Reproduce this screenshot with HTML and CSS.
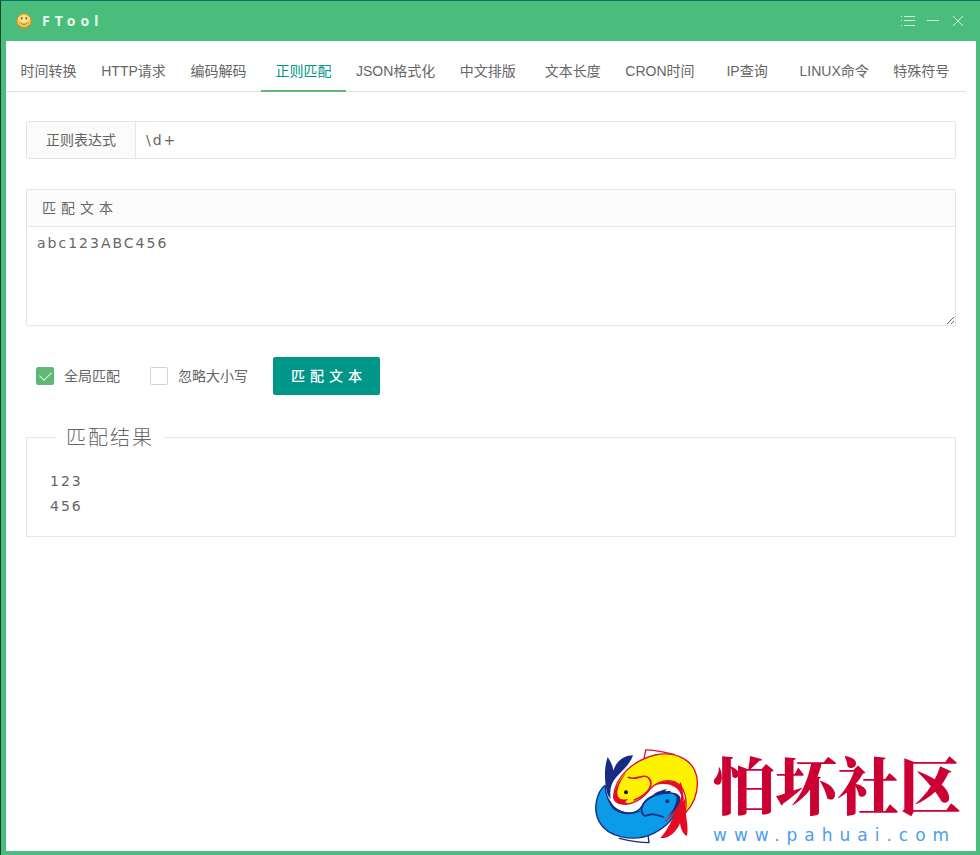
FILE: index.html
```html
<!DOCTYPE html>
<html lang="zh-CN">
<head>
<meta charset="utf-8">
<meta name="viewport" content="width=device-width, initial-scale=1">
<title>FTool</title>
<link rel="stylesheet" href="styles.css">
</head>
<body>
<div class="window">
  <header class="titlebar">
    <svg class="app-icon" viewBox="0 0 16 16" aria-hidden="true">
      <defs>
        <radialGradient id="face" cx="50%" cy="38%" r="60%">
          <stop offset="0" stop-color="#fff0a4"/>
          <stop offset="0.65" stop-color="#f3d467"/>
          <stop offset="1" stop-color="#dfa02e"/>
        </radialGradient>
      </defs>
      <circle cx="8" cy="8" r="7.3" fill="url(#face)" stroke="#c98a2a"/>
      <ellipse cx="5.8" cy="5.4" rx="0.8" ry="1.3" fill="#80601a"/>
      <ellipse cx="10.2" cy="5.4" rx="0.8" ry="1.3" fill="#80601a"/>
      <path d="M3.8 9.4Q8 13.6 12.2 9.4" fill="none" stroke="#a87c22" stroke-linecap="round"/>
    </svg>
    <h1 class="app-name">FTool</h1>
    <div class="window-actions">
      <button type="button" class="icon-button" aria-label="菜单">
        <svg viewBox="0 0 14 12"><path d="M0 1.5h1M0 5.5h1M0 10.5h1M3 1.5h11M3 5.5h11M3 10.5h11"/></svg>
      </button>
      <button type="button" class="icon-button" aria-label="最小化">
        <svg viewBox="0 0 14 12"><path d="M1 5.5h12"/></svg>
      </button>
      <button type="button" class="icon-button" aria-label="关闭">
        <svg viewBox="0 0 14 12"><path d="M2 1l10 10M12 1L2 11"/></svg>
      </button>
    </div>
  </header>

  <main class="content">
    <nav class="tabs">
      <a class="tab" href="#time">时间转换</a>
      <a class="tab" href="#http">HTTP请求</a>
      <a class="tab" href="#code">编码解码</a>
      <a class="tab tab-active" href="#regex" aria-current="page">正则匹配</a>
      <a class="tab" href="#json">JSON格式化</a>
      <a class="tab" href="#format">中文排版</a>
      <a class="tab" href="#length">文本长度</a>
      <a class="tab" href="#cron">CRON时间</a>
      <a class="tab" href="#ip">IP查询</a>
      <a class="tab" href="#linux">LINUX命令</a>
      <a class="tab" href="#symbols">特殊符号</a>
    </nav>

    <form class="regex-form">
      <div class="pattern">
        <label class="pattern-label" for="pattern">正则表达式</label>
        <input class="pattern-input" id="pattern" type="text" value="\d+">
      </div>

      <div class="source">
        <label class="source-label" for="source">匹配文本</label>
        <textarea class="source-input" id="source">abc123ABC456</textarea>
      </div>

      <div class="options">
        <label class="option"><input class="check" type="checkbox" checked>全局匹配</label>
        <label class="option"><input class="check" type="checkbox">忽略大小写</label>
        <button type="button" class="submit">匹配文本</button>
      </div>

      <fieldset class="result">
        <legend class="result-title">匹配结果</legend>
        <div>123</div>
        <div>456</div>
      </fieldset>
    </form>

    <footer class="brand">
      <svg class="brand-logo" viewBox="32 38 312 288" aria-hidden="true">
        <g stroke-linejoin="round" stroke-linecap="round">
          <path d="M178 76L184 44C210 42 240 52 270 57" fill="none" stroke="#d71532" stroke-width="4"/>
          <path d="M190 292L194 322C165 322 130 315 105 309" fill="none" stroke="#182b82" stroke-width="4"/>
          <path d="M62 150C36 172 25 222 44 258C68 304 146 324 208 294C248 274 276 242 286 202C287 182 270 172 250 172C215 172 184 188 172 214C160 232 142 236 120 232C82 225 66 195 62 150Z" fill="#0a9ce8" stroke="#182b82" stroke-width="4"/>
          <path d="M88 182C92 124 146 76 212 59C272 47 335 72 339 138C341 178 325 210 302 235C311 194 302 152 270 139C238 128 206 148 190 170C170 195 130 215 106 203C92 198 87 192 88 182Z" fill="#fff200" stroke="#d71532" stroke-width="4"/>
          <path d="M88 182C92 156 106 130 126 112C108 136 96 160 100 180C103 194 118 193 132 192C122 198 120 202 132 205C108 212 86 204 88 182Z" fill="#e50b24"/>
          <path d="M132 126C154 138 180 112 192 127C210 145 196 174 150 194" fill="none" stroke="#d71532" stroke-width="5"/>
          <path d="M66 162C60 130 60 94 70 65C79 79 86 92 87 106C96 76 120 60 146 60C138 86 112 108 96 125C80 143 75 164 79 190C71 184 68 174 66 162Z" fill="#182b82"/>
          <path d="M72 182C84 226 128 242 174 224C140 246 98 237 82 216L79 211Z" fill="#182b82"/>
          <path d="M254 173C216 173 178 190 172 218C170 232 176 239 183 242C200 232 218 239 238 245" fill="none" stroke="#182b82" stroke-width="5"/>
          <path d="M204 178C220 168 235 164 248 161L242 168L262 166L252 174C274 172 280 184 275 200C270 220 260 234 246 246C266 234 282 218 288 200C294 179 274 170 252 172Z" fill="#182b82"/>
          <path d="M212 150C234 133 270 133 284 150L288 140C296 153 295 175 299 190C286 224 264 246 236 262C272 232 291 202 290 180C284 155 252 138 212 150Z" fill="#e50b24"/>
          <path d="M304 188C270 224 257 280 228 308C252 312 276 290 287 264C290 284 298 299 308 302C315 266 300 244 304 188Z" fill="#e50b24"/>
          <circle cx="125" cy="171" r="6" fill="#111"/>
          <circle cx="249" cy="198" r="6" fill="#182b82"/>
        </g>
      </svg>
      <div class="brand-text">
        <strong class="brand-name">怕坏社区</strong>
        <span class="brand-url">www.pahuai.com</span>
      </div>
    </footer>
  </main>
</div>
</body>
</html>
```
FILE: styles.css
```css
* {
  box-sizing: border-box;
}

body {
  margin: 0;
  color: #666;
  font: 14px/24px "Noto Sans", "Noto Sans CJK SC", sans-serif;
}

.window {
  display: flex;
  flex-direction: column;
  min-height: 100vh;
  padding: 0 4px 4px 5px;
  border-top: 1px solid #087065;
  border-left: 1px solid #123f2b;
  background: #4abd7c;
}

.titlebar {
  display: flex;
  align-items: center;
  height: 40px;
  padding: 0 11px 0 10px;
}

.app-icon {
  width: 16px;
  height: 16px;
  margin-right: 10px;
}

.app-name {
  margin: 0;
  color: #e4ffed;
  font: bold 14px/24px "Noto Sans", sans-serif;
  letter-spacing: 5px;
}

.window-actions {
  display: flex;
  gap: 11px;
  margin-left: auto;
}

.icon-button {
  display: flex;
  padding: 0;
  border: 0;
  background: none;
}

.icon-button svg {
  width: 14px;
  height: 12px;
  fill: none;
  stroke: #d0f5df;
}

.content {
  display: flex;
  flex: 1;
  flex-direction: column;
  background: #fff;
}

.tabs {
  display: flex;
  margin: 10px 10px 0 0;
  border-bottom: 1px solid #e2e2e2;
}

.tab {
  min-width: 85px;
  margin-bottom: -1px;
  padding: 2px 10px 0;
  border-bottom: 2px solid transparent;
  color: #666;
  font-family: "Liberation Sans", "Noto Sans CJK SC", sans-serif;
  line-height: 37px;
  text-align: center;
  text-decoration: none;
  white-space: nowrap;
}

.tab-active {
  border-color: #5fb878;
  color: #009688;
}

.regex-form {
  padding: 29px 20px 0;
}

.pattern {
  display: flex;
  height: 38px;
  border: 1px solid #e6e6e6;
  border-radius: 2px;
}

.pattern-label {
  width: 109px;
  border-right: 1px solid #e6e6e6;
  background: #fbfbfb;
  line-height: 36px;
  text-align: center;
}

.pattern-input,
.source-input,
.result {
  color: #666;
  font: 14px/25px "DejaVu Sans", "Noto Sans CJK SC", sans-serif;
  letter-spacing: 2px;
}

.pattern-input {
  flex: 1;
  min-width: 0;
  padding: 0 10px;
  border: 0;
  background: #fff;
}

.source {
  margin-top: 30px;
  border: 1px solid #e6e6e6;
  border-radius: 2px;
}

.source-label {
  display: block;
  padding: 0 15px;
  border-bottom: 1px solid #e6e6e6;
  background: #fbfbfb;
  line-height: 36px;
  letter-spacing: 5px;
}

.source-input {
  display: block;
  width: 100%;
  height: 98px;
  padding: 4px 10px;
  border: 0;
  background: #fff;
  resize: vertical;
}

.options {
  display: flex;
  align-items: center;
  margin-top: 31px;
  padding-left: 10px;
}

.option {
  display: flex;
  align-items: center;
  gap: 10px;
  margin-right: 30px;
}

.option:nth-child(2) {
  margin-right: 25px;
}

.check {
  display: grid;
  place-items: center;
  width: 18px;
  height: 18px;
  margin: 0;
  border: 1px solid #d2d2d2;
  border-radius: 2px;
  background: #fff;
  appearance: none;
}

.check:checked {
  border-color: #5fb878;
  background: #5fb878;
}

.check:checked::before {
  content: "";
  width: 10px;
  height: 6px;
  margin-bottom: 3px;
  border: solid #e9ffee;
  border-width: 0 0 1px 1px;
  transform: rotate(-45deg);
}

.submit {
  height: 38px;
  padding: 0 13px 0 18px;
  border: 0;
  border-radius: 2px;
  background: #009688;
  color: #fff;
  font: 500 14px/38px "Noto Sans", "Noto Sans CJK SC", sans-serif;
  letter-spacing: 5px;
}

.result {
  min-width: 0;
  margin: 29px 0 0;
  padding: 19px 23px 17px;
  border: 1px solid #e6e6e6;
}

.result-title {
  margin-left: 6px;
  padding: 2px 10px 0;
  font: 300 20px/24px "Noto Sans", "Noto Sans CJK SC", sans-serif;
  letter-spacing: 2px;
}

.brand {
  display: flex;
  align-items: flex-end;
  align-self: flex-end;
  gap: 14px;
  margin-top: auto;
  padding: 24px 15px 4px 0;
}

.brand-logo {
  width: 104px;
  height: 96px;
  margin-bottom: 3px;
}

.brand-text {
  display: flex;
  flex-direction: column;
}

.brand-name {
  color: #cc0033;
  font: 900 62px/78px "Noto Serif CJK SC", "Noto Sans CJK SC", serif;
}

.brand-url {
  color: #4c9eed;
  font: 17px/24px "DejaVu Sans", sans-serif;
  letter-spacing: 7px;
}
```
